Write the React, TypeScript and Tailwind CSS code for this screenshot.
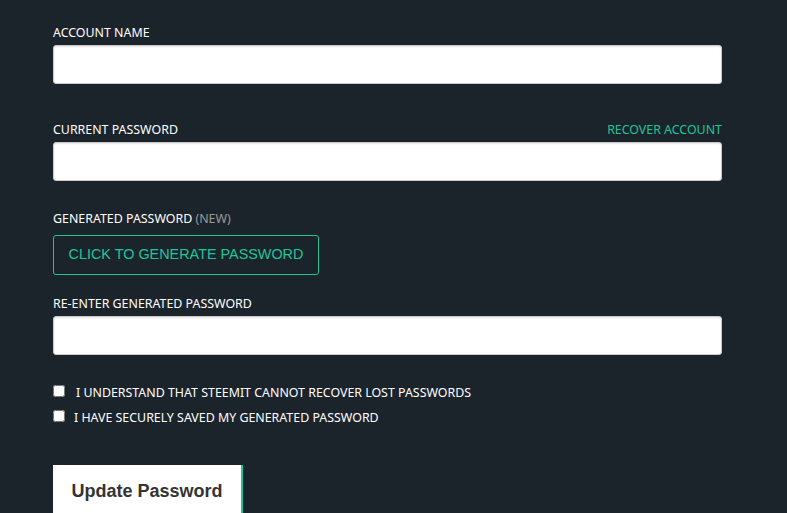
import { useState } from "react";

const label = "block text-[12.4px] leading-[18px] uppercase text-white";

function Field({ name, extra }: { name: string; extra?: React.ReactNode }) {
  return (
    <div>
      <div className="flex items-end justify-between">
        <span className={label}>{name}</span>
        {extra}
      </div>
      <input
        type="text"
        className="mt-[3px] block h-[39px] w-full rounded-[3px] border border-[#cacaca] bg-white px-2 text-[15px] text-[#333] shadow-[inset_0_1px_2px_rgba(0,0,0,0.1)] outline-none"
      />
    </div>
  );
}

export default function App() {
  const [a, setA] = useState(false);
  const [b, setB] = useState(false);

  return (
    <div
      className="min-h-[513px] w-full overflow-hidden bg-[#1c242b]"
      style={{ fontFamily: '"Noto Sans", "Open Sans", sans-serif' }}
    >
      <div className="w-[669px] ml-[53px] pt-[24px]">
        <Field name="Account Name" />
        <div className="mt-[37px]">
          <Field
            name="Current Password"
            extra={
              <a className="text-[12.4px] leading-[18px] uppercase text-[#1fc599] cursor-pointer">
                Recover Account
              </a>
            }
          />
        </div>

        <div className="mt-[29px]">
          <span className={label}>
            Generated Password <span className="text-[#999]">(new)</span>
          </span>
          <button
            type="button"
            className="mt-[7px] h-[40px] w-[266px] rounded-[3px] border border-[#1fc599] bg-transparent text-[14.4px] uppercase text-[#1fc599]"
            style={{ fontFamily: '"Liberation Sans", Arial, sans-serif' }}
          >
            Click to generate password
          </button>
        </div>

        <div className="mt-[20px]">
          <Field name="Re-enter Generated Password" />
        </div>

        <div className="mt-[30px] flex flex-col gap-[9px]">
          <label className="flex items-center gap-[11px] text-[12.4px] leading-[16px] uppercase text-white">
            <input
              type="checkbox"
              checked={a}
              onChange={() => setA(!a)}
              className="h-[12px] w-[12px] -mt-[4px]"
            />
            I understand that Steemit cannot recover lost passwords
          </label>
          <label className="flex items-center gap-[9px] text-[12.4px] leading-[16px] uppercase text-white">
            <input
              type="checkbox"
              checked={b}
              onChange={() => setB(!b)}
              className="h-[12px] w-[12px] -mt-[4px]"
            />
            I have securely saved my generated password
          </label>
        </div>

        <button
          type="button"
          className="mt-[39px] h-[52px] w-[190px] border-r-2 border-[#1fc599] bg-white text-[18px] font-bold text-[#333]"
          style={{ fontFamily: '"Liberation Sans", Arial, sans-serif' }}
        >
          Update Password
        </button>
      </div>
    </div>
  );
}
